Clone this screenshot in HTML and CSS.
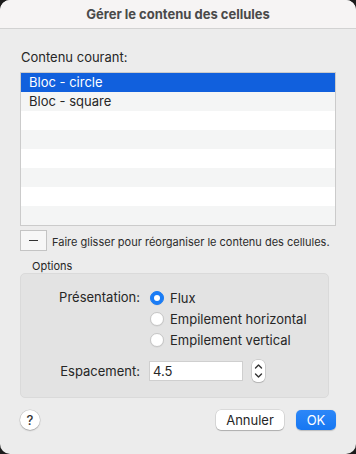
FILE: index.html
```html
<!DOCTYPE html>
<html lang="fr">
<head>
    <meta charset="UTF-8">
    <meta name="viewport" content="width=device-width, initial-scale=1.0">
    <title>Gérer le contenu des cellules</title>
    <link rel="stylesheet" href="styles.css">
</head>
<body>
    <div class="window">
        <div class="titlebar">Gérer le contenu des cellules</div>
        <div class="content">
            <div class="label">Contenu courant:</div>
            <ul class="list">
                <li class="selected">Bloc - circle</li>
                <li>Bloc - square</li>
                <li></li>
                <li></li>
                <li></li>
                <li></li>
                <li></li>
                <li></li>
            </ul>
            <div class="reorder">
                <button class="minus"><span></span></button>
                <span class="hint">Faire glisser pour réorganiser le contenu des cellules.</span>
            </div>
            <div class="group-title">Options</div>
            <div class="group">
                <div class="field">
                    <div class="field-label">Présentation:</div>
                    <div class="radios">
                        <label class="radio checked"><span class="dot"></span>Flux</label>
                        <label class="radio"><span class="dot"></span>Empilement horizontal</label>
                        <label class="radio"><span class="dot"></span>Empilement vertical</label>
                    </div>
                </div>
                <div class="field spacing">
                    <div class="field-label">Espacement:</div>
                    <div class="input">4.5</div>
                    <div class="stepper">
                        <svg width="13" height="22" viewBox="0 0 13 22">
                            <path d="M3.5 8 L6.5 5 L9.5 8" fill="none" stroke="#333" stroke-width="1.4" stroke-linecap="round" stroke-linejoin="round"/>
                            <path d="M3.5 14 L6.5 17 L9.5 14" fill="none" stroke="#333" stroke-width="1.4" stroke-linecap="round" stroke-linejoin="round"/>
                        </svg>
                    </div>
                </div>
            </div>
            <div class="footer">
                <button class="help">?</button>
                <div class="actions">
                    <button class="cancel">Annuler</button>
                    <button class="ok">OK</button>
                </div>
            </div>
        </div>
    </div>
</body>
</html>
```

FILE: styles.css
```css
body {
    margin: 0;
    background: #1c1c1c;
    font-family: 'Inter', 'Liberation Sans', sans-serif;
    color: #262626;
}
.window {
    width: 356px;
    height: 454px;
    background: #ececec;
    border-radius: 10px;
    overflow: hidden;
}
.titlebar {
    height: 28px;
    line-height: 28px;
    background: #f6f4f4;
    border-bottom: 1px solid #d2d2d2;
    text-align: center;
    font-size: 13px;
    font-weight: 700;
    color: #4a4a4a;
}
.content {
    padding: 20px 20px 0 20px;
}
.label {
    font-size: 13px;
    line-height: 16px;
    padding-left: 1px;
}
.list {
    list-style: none;
    margin: 7px 0 0 0;
    padding: 0;
    border: 1px solid #cbcbcb;
    background: #fff;
}
.list li {
    height: 19px;
    line-height: 19px;
    padding-left: 8px;
    font-size: 13px;
    color: #262626;
}
.list li:nth-child(even) {
    background: #f4f5f5;
}
.list li.selected {
    background: #1160dd;
    color: #fff;
}
.reorder {
    display: flex;
    align-items: center;
    gap: 5px;
    margin-top: 4px;
}
.minus {
    width: 27px;
    height: 21px;
    padding: 0;
    border: 1px solid #c4c4c4;
    background: #f7f7f7;
    display: flex;
    align-items: center;
    justify-content: center;
}
.minus span {
    width: 9px;
    height: 1px;
    background: #333;
}
.hint {
    font-size: 11px;
    color: #2b2b2b;
    margin-top: 2px;
}
.group-title {
    margin-top: 8px;
    padding-left: 12px;
    font-size: 11px;
    line-height: 14px;
}
.group {
    margin-right: 7px;
    background: #e3e3e3;
    border: 1px solid #dadada;
    border-radius: 5px;
    padding: 13px 0 15px 0;
}
.field {
    display: flex;
    gap: 10px;
    font-size: 13px;
}
.field-label {
    width: 119px;
    text-align: right;
    line-height: 21px;
}
.radios {
    display: flex;
    flex-direction: column;
}
.radio {
    display: flex;
    align-items: center;
    gap: 6px;
    height: 21px;
}
.dot {
    width: 14px;
    height: 14px;
    box-sizing: border-box;
    border-radius: 50%;
    background: #fff;
    border: 1px solid #c6c6c6;
    box-shadow: 0 0.5px 1px rgba(0, 0, 0, 0.08);
}
.radio.checked .dot {
    background: #1a7cf5;
    border-color: #1a7cf5;
    display: flex;
    align-items: center;
    justify-content: center;
}
.radio.checked .dot::after {
    content: "";
    width: 6px;
    height: 6px;
    border-radius: 50%;
    background: #fff;
}
.spacing {
    margin-top: 10px;
    align-items: center;
    gap: 9px;
}
.input {
    width: 94px;
    height: 20px;
    box-sizing: border-box;
    background: #fff;
    border: 1px solid #cfcfcf;
    padding-left: 3px;
    line-height: 18px;
    font-size: 13px;
}
.stepper {
    width: 13px;
    height: 22px;
    background: #fff;
    border-radius: 5px;
    box-shadow: 0 0 0 0.5px rgba(0, 0, 0, 0.18), 0 1px 1px rgba(0, 0, 0, 0.12);
    display: flex;
}
.footer {
    display: flex;
    justify-content: space-between;
    align-items: center;
    margin-top: 12px;
}
.help {
    width: 20px;
    height: 20px;
    border-radius: 50%;
    border: none;
    padding: 0;
    background: #fff;
    box-shadow: 0 0 0 0.5px rgba(0, 0, 0, 0.15), 0 1px 1.5px rgba(0, 0, 0, 0.2);
    font-family: 'Inter', sans-serif;
    font-size: 13px;
    font-weight: 500;
    color: #333;
}
.actions {
    display: flex;
    gap: 12px;
}
.cancel, .ok {
    height: 20px;
    border: none;
    border-radius: 5px;
    padding: 0;
    font-family: 'Inter', sans-serif;
    font-size: 13px;
}
.cancel {
    width: 68px;
    background: #fff;
    color: #262626;
    box-shadow: 0 0 0 0.5px rgba(0, 0, 0, 0.15), 0 1px 1px rgba(0, 0, 0, 0.2);
}
.ok {
    width: 40px;
    background: linear-gradient(#2d87f8, #1677f2);
    color: #fff;
    box-shadow: 0 0.5px 1px rgba(0, 0, 0, 0.2);
}
```
